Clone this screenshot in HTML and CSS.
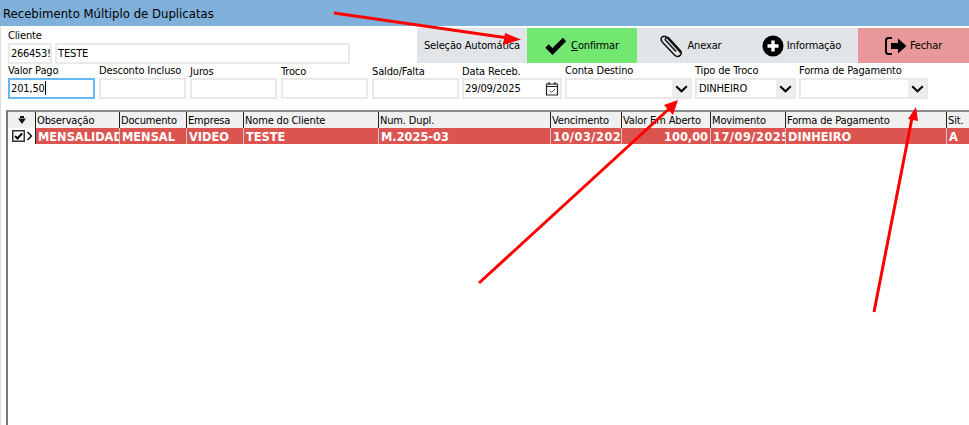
FILE: index.html
```html
<!DOCTYPE html>
<html lang="pt">
<head>
<meta charset="utf-8">
<title>Recebimento Múltiplo de Duplicatas</title>
<link rel="stylesheet" href="styles.css">
</head>
<body>
<div class="window">
  <header class="titlebar">Recebimento Múltiplo de Duplicatas</header>
  <section class="top">
    <div class="client">
      <label class="lbl">Cliente</label>
      <div class="client-inputs">
        <div class="box code">266453!</div>
        <div class="box name">TESTE</div>
      </div>
    </div>
    <div class="toolbar">
      <div class="tool auto">Seleção Automática</div>
      <div class="tool confirm">
        <svg width="22" height="18" viewBox="0 0 22 18"><path d="M2 9 7.500 14.500 19.500 2.500" fill="none" stroke="#000" stroke-width="4.800"/></svg>
        <span><u>C</u>onfirmar</span>
      </div>
      <div class="tool attach">
        <svg width="24" height="26" viewBox="0 0 24 26"><path d="M20.500 21.500 7 6.500C5 4 2.200 5.600 1.600 6.600 .8 8 1 9.600 2.200 11L14.500 24c2 2 4.400 1.600 5.600.4 1.400-1.400 1.500-3.300.2-5L9 7.200C8 6 6.800 6 6 6.800c-.8.800-.8 2-.1 2.800L16 20.500" transform="translate(0 -2)" fill="none" stroke="#111" stroke-width="1.500"/></svg>
        <span>Anexar</span>
      </div>
      <div class="tool info">
        <svg width="22" height="22" viewBox="0 0 22 22"><circle cx="11" cy="11" r="10.500" fill="#000"/><path d="M11 5.500v11M5.500 11h11" stroke="#fff" stroke-width="3.400"/></svg>
        <span>Informação</span>
      </div>
      <div class="tool close">
        <svg width="22" height="18" viewBox="0 0 22 18"><path d="M7 1H3.500C2 1 1 2 1 3.500v11C1 16 2 17 3.500 17H7" fill="none" stroke="#000" stroke-width="2"/><path d="M6 6h7V1.500L21.500 9 13 16.500V12H6z" fill="#000"/></svg>
        <span>Fechar</span>
      </div>
    </div>
  </section>
  <section class="fields">
    <div class="field w87"><label class="lbl">Valor Pago</label><div class="box focus">201,50<i class="caret"></i></div></div>
    <div class="field w87"><label class="lbl">Desconto Incluso</label><div class="box"></div></div>
    <div class="field w87 low"><label class="lbl">Juros</label><div class="box"></div></div>
    <div class="field w87 low"><label class="lbl">Troco</label><div class="box"></div></div>
    <div class="field w87 low"><label class="lbl">Saldo/Falta</label><div class="box"></div></div>
    <div class="field date low"><label class="lbl">Data Receb.</label>
      <div class="box picker">29/09/2025
        <svg class="cal" width="14" height="15" viewBox="0 0 14 15"><path d="M1.500 3h11v11h-11zM1.500 5.500h11M4 1v3M10 1v3" fill="none" stroke="#222" stroke-width="1.200"/><path d="M4.500 9.500 6.500 11.500 10 8" fill="none" stroke="#444"/></svg>
      </div></div>
    <div class="field conta"><label class="lbl">Conta Destino</label><div class="box select"><span></span><b class="drop"><svg width="13" height="8" viewBox="0 0 13 8"><path d="M1.200 1.200 6.500 6.200 11.800 1.200" fill="none" stroke="#000" stroke-width="2.100"/></svg></b></div></div>
    <div class="field tipo"><label class="lbl">Tipo de Troco</label><div class="box select"><span>DINHEIRO</span><b class="drop"><svg width="13" height="8" viewBox="0 0 13 8"><path d="M1.200 1.200 6.500 6.200 11.800 1.200" fill="none" stroke="#000" stroke-width="2.100"/></svg></b></div></div>
    <div class="field forma"><label class="lbl">Forma de Pagamento</label><div class="box select"><span></span><b class="drop"><svg width="13" height="8" viewBox="0 0 13 8"><path d="M1.200 1.200 6.500 6.200 11.800 1.200" fill="none" stroke="#000" stroke-width="2.100"/></svg></b></div></div>
  </section>
  <section class="grid">
    <div class="head">
      <div class="corner"><svg width="8" height="8" viewBox="0 0 8 8"><path d="M2 0h4v2H2zM0 2.500h8L4 8z" fill="#111"/></svg></div>
      <div>Observação</div><div>Documento</div><div>Empresa</div><div>Nome do Cliente</div><div>Num. Dupl.</div><div>Vencimento</div><div>Valor Em Aberto</div><div>Movimento</div><div>Forma de Pagamento</div><div>Sit.</div>
    </div>
    <div class="row">
      <div class="corner mark">
        <svg width="13" height="12" viewBox="0 0 13 12"><rect x=".75" y=".75" width="11.500" height="10.500" fill="#fff" stroke="#333" stroke-width="1.500"/><path d="M3 6 5.500 8.500 10 3.500" fill="none" stroke="#000" stroke-width="2"/></svg>
        <svg width="7" height="10" viewBox="0 0 7 10"><path d="M1.500 1 5.500 5 1.500 9" fill="#fff" stroke="#000" stroke-width="1.300"/></svg>
      </div>
      <div>MENSALIDADE</div><div>MENSAL</div><div>VIDEO</div><div>TESTE</div><div>M.2025-03</div><div class="wide">10/03/2025</div><div class="num">100,00</div><div class="wide">17/09/2025</div><div>DINHEIRO</div><div>A</div>
    </div>
  </section>
  <svg class="arrows" width="969" height="425" viewBox="0 0 969 425">
    <path d="M334 13 508 38M479 283 670 108M874 312 912 118" fill="none" stroke="#f00" stroke-width="3"/>
    <path d="M521 39.500 503 45 505 33zM678 100 673 115 664 105zM916 107 918 121 908 119z" fill="#f00"/>
  </svg>
</div>
</body>
</html>
```

FILE: styles.css
```css
* { box-sizing: border-box; }
html, body { margin: 0; height: 100%; }
body { background: #fff; overflow: hidden; }
.window {
  position: relative;
  height: 425px;
  font-family: "DejaVu Sans", sans-serif;
  font-stretch: condensed;
  font-size: 11px;
  letter-spacing: -0.15px;
  color: #000;
  display: flex;
  flex-direction: column;
  box-shadow: inset 1px 0 #ddd;
}
.titlebar {
  height: 26px;
  background: #7fb0da;
  padding: 6px 0 0 3px;
  font-size: 13px;
  letter-spacing: 0;
  line-height: 16px;
  flex: none;
}
.top {
  display: flex;
  justify-content: space-between;
  padding: 2px 0 0 8px;
  height: 37px;
  flex: none;
}
.lbl { display: block; line-height: 13px; white-space: nowrap; }
.client .lbl { height: 15px; padding-top: 1px; }
.client-inputs { display: flex; gap: 3px; }
.box {
  height: 21px;
  border: 2px solid #e9e9e9;
  background: #fff;
  line-height: 17px;
  padding-left: 1px;
  white-space: nowrap;
  overflow: hidden;
}
.code { width: 44px; letter-spacing: -0.3px; }
.name { width: 295px; padding-left: 1px; }
.toolbar {
  display: flex;
  width: 552px;
  height: 35px;
  background: #e1e5e8;
}
.tool { display: flex; align-items: center; justify-content: center; gap: 3px; }
.auto { width: 110px; }
.confirm { width: 110px; background: #72e872; gap: 4px; }
.attach { width: 110px; padding-right: 2px; gap: 3px; }
.info { width: 111px; padding-right: 2px; }
.close { width: 111px; background: #e89898; gap: 3px; }
.fields {
  display: flex;
  gap: 4px;
  padding: 2px 0 0 8px;
  height: 36px;
  flex: none;
  align-items: flex-start;
}
.field { display: flex; flex-direction: column; gap: 2px; }
.field .lbl { height: 11px; line-height: 11px; }
.low .lbl { height: 12px; line-height: 14px; margin-bottom: -1px; }
.w87 { width: 87px; }
.date { width: 100px; margin-left: -1px; }
.conta { width: 127px; margin-left: -1px; }
.tipo { width: 101px; margin-left: -1px; }
.forma { width: 129px; margin-left: -1px; }
.focus { border: 2px solid #66b8f2; }
.caret { display: inline-block; width: 1px; height: 14px; background: #000; vertical-align: -3px; }
.picker { display: flex; justify-content: space-between; align-items: center; padding-right: 1px; }
.select { display: flex; justify-content: space-between; padding-right: 0; }
.select span { padding-left: 1px; }
.drop { width: 18px; height: 17px; background: #eee; display: flex; align-items: center; justify-content: center; }
.grid {
  margin: 11px 0 0 6px;
  flex: 1;
  border-top: 2px solid #8a8a8a;
  border-left: 2px solid #7a7a7a;
}
.head, .row {
  display: grid;
  grid-template-columns: 28px 84px 67px 57px 135px 172px 71px 89px 75px 161px 1fr;
  grid-template-rows: 16px;
}
.head { height: 16px; background: #f0f0f0; line-height: 15px; }
.head > div { border-right: 1px solid #222; padding: 1px 0 0 1px; white-space: nowrap; overflow: hidden; }
.head > div:last-child { border-right: 0; }
.row {
  height: 16px;
  background: #dc5450;
  color: #fff;
  font-weight: bold;
  font-stretch: normal;
  font-size: 11.400px;
  letter-spacing: 0;
  line-height: 15px;
}
.row > div { border-right: 1px solid #c8c8c8; padding: 2px 0 0 2px; white-space: nowrap; overflow: hidden; }
.row > div:last-child { border-right: 0; }
.row .wide { letter-spacing: 0.5px; }
.row .num { text-align: right; padding: 2px 2px 0 0; }
.head .corner { display: flex; align-items: center; justify-content: center; padding: 0; }
.row .corner { background: #fff; display: flex; align-items: center; gap: 1px; padding: 0 0 0 4px; border-right: 1px solid #222; }
.arrows { position: absolute; left: 0; top: 0; pointer-events: none; }
```
